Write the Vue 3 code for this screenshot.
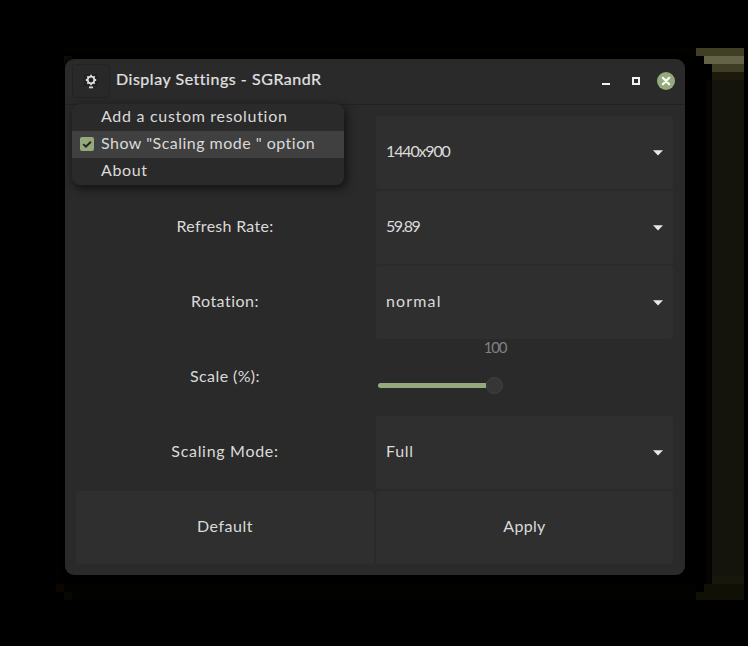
<script setup>
import { ref } from 'vue'

const menu = ref([
  { label: 'Add a custom resolution', fit: 'm-add' },
  { label: 'Show "Scaling mode " option', checked: true, fit: 'm-show' },
  { label: 'About', fit: 'm-about' },
])
const rows = [
  { label: '', value: '1440x900', type: 'combo', fit: '', vfit: 'v-res' },
  { label: 'Refresh Rate:', value: '59.89', type: 'combo', fit: 'l-refresh', vfit: 'v-rate' },
  { label: 'Rotation:', value: 'normal', type: 'combo', fit: 'l-rot', vfit: 'v-rot' },
  { label: 'Scale (%):', value: '100', type: 'scale', fit: 'l-scale', vfit: '' },
  { label: 'Scaling Mode:', value: 'Full', type: 'combo', fit: 'l-mode', vfit: 'v-full' },
]
</script>

<template>
  <div class="desktop">
    <svg class="backdrop" width="748" height="646" viewBox="0 0 748 646" shape-rendering="crispEdges" aria-hidden="true">
      <path fill="#020201" d="M64 48h632v8H64zM56 584h640v16H64v-8h-8z" />
      <path fill="#403f25" d="M696 48h48v8h-48z" />
      <path fill="#646247" d="M704 56h40v8h-40z" />
      <path fill="#403d25" d="M712 64h32v8h-32z" />
      <path fill="#1b1a0c" d="M712 72h32v8h-32z" />
      <path fill="#14140c" d="M712 80h32v496h-32z" />
      <path fill="#040402" d="M706 80h6v504h-6z" />
      <path fill="#17170c" d="M712 576h32v8h-32z" />
      <path fill="#101007" d="M704 584h40v8h-40zM696 592h48v8h-48z" />
      <path fill="#030301" d="M57 80h2v500h-2z" />
      <path fill="#0b0602" d="M56 584h8v8h-8z" />
      <path fill="#080802" d="M64 592h8v8h-8z" />
      <path fill="#10100a" d="M64 56h8v8h-8z" />
    </svg>

    <main class="window">
      <header class="titlebar">
        <button class="menu-button" aria-label="Menu">
          <svg width="16" height="16" viewBox="0 0 16 16">
            <rect x="1" y="1" width="14" height="12" fill="#222" />
            <g stroke="#dcdcdc" fill="none">
              <circle cx="8" cy="7" r="3.3" stroke-width="1.8" />
              <path stroke-width="1.8" d="M8 1.8v2M8 10.2v2M2.8 7h2M11.2 7h2M4.3 3.3l1.4 1.4M10.3 9.3l1.4 1.4M11.7 3.3l-1.4 1.4M5.7 9.3l-1.4 1.4" />
            </g>
            <rect x="6" y="13.5" width="4" height="1.8" fill="#d4d4d4" />
          </svg>
        </button>
        <h1>Display Settings - SGRandR</h1>
        <div class="controls">
          <svg width="8" height="10" viewBox="0 0 8 10"><path fill="#f2f2f2" d="M0 7h8v2H0z" /></svg>
          <svg width="8" height="8" viewBox="0 0 8 8"><path fill="none" stroke="#f2f2f2" stroke-width="2" d="M1 1h6v6H1z" /></svg>
          <svg width="18" height="18" viewBox="0 0 18 18">
            <circle cx="9" cy="9" r="9" fill="#94aa7d" />
            <path d="M5.8 5.8l6.4 6.4M12.2 5.8l-6.4 6.4" stroke="#fff" stroke-width="2.2" stroke-linecap="round" />
          </svg>
        </div>
      </header>

      <ul class="menu">
        <li v-for="item in menu" :key="item.label" :class="{ active: item.checked }">
          <svg v-if="item.checked" class="check" width="14" height="14" viewBox="0 0 14 14">
            <rect width="14" height="14" rx="2" fill="#94aa7d" />
            <path d="M3.2 7.1l2.7 2.6 5-5" fill="none" stroke="#22261f" stroke-width="2" />
          </svg>
          <span :class="item.fit">{{ item.label }}</span>
        </li>
      </ul>

      <section class="grid">
        <template v-for="row in rows" :key="row.value">
          <div class="label"><span :class="row.fit">{{ row.label }}</span></div>
          <div v-if="row.type === 'combo'" class="combo">
            <span :class="row.vfit">{{ row.value }}</span>
            <svg width="10" height="6" viewBox="0 0 10 6"><path d="M0 .3h10L5 5.6z" fill="#e8e8e8" /></svg>
          </div>
          <div v-else class="scale">
            <span class="amount">{{ row.value }}</span>
            <div class="track"><i class="fill"></i><i class="knob"></i></div>
          </div>
        </template>
        <button class="action"><span class="b-default">Default</span></button>
        <button class="action"><span class="b-apply">Apply</span></button>
      </section>
    </main>
  </div>
</template>

<style>
body { margin: 0; background: #000; }
</style>

<style scoped>
* { box-sizing: border-box; }
.desktop {
  position: relative;
  width: 748px;
  height: 646px;
  padding: 59px 0 0 65px;
  overflow: hidden;
  background: #000;
  color: #dadada;
  font: 16px/20px Lato, "Open Sans", sans-serif;
  white-space: pre;
}
.backdrop { position: absolute; left: 0; top: 0; }
svg { display: block; flex: none; }
.window {
  position: relative;
  width: 620px;
  height: 516px;
  border-radius: 9px;
  background: #2a2a2a;
  box-shadow: 0 0 5px 2px #000;
}
.titlebar {
  display: flex;
  align-items: center;
  height: 46px;
  padding: 0 10px 2px 7px;
  border-bottom: 1px solid #222;
}
.menu-button {
  display: grid;
  place-items: center;
  width: 38px;
  height: 34px;
  padding: 0;
  border: 1px solid #232323;
  border-radius: 3px;
  background: #292929;
}
h1 {
  margin: 0 0 3px 6px;
  color: #e2e2e2;
  font-size: 16px;
  line-height: 20px;
  font-weight: 400;
  -webkit-text-stroke: .2px currentColor;
  letter-spacing: .53px;
}
.controls { display: flex; align-items: center; gap: 22px; margin-left: auto; }
.controls svg:last-child { margin-left: -5px; }
.menu {
  position: absolute;
  z-index: 2;
  left: 7px;
  top: 45px;
  width: 272px;
  margin: 0;
  padding: 0;
  list-style: none;
  border-radius: 8px;
  background: #2a2a2a;
  box-shadow: 2px 3px 9px 1px #141414;
}
.menu li { display: flex; align-items: center; height: 27px; padding: 0 0 3px 29px; }
.menu li.active { padding-left: 8px; background: #404040; }
.check { margin: 2px 7px 0 0; }
.grid {
  display: grid;
  grid-template-columns: 298px 297px;
  grid-auto-rows: 73px;
  gap: 2px;
  padding: 11px;
}
.label { display: flex; align-items: center; justify-content: center; padding-bottom: 3px; }
.combo {
  display: flex;
  align-items: center;
  justify-content: space-between;
  padding: 0 10px 3px;
  border-radius: 3px;
  background: #2f2f2f;
}
.combo svg { margin-top: 4px; }
.action {
  padding: 0 0 3px;
  border: 0;
  border-radius: 3px;
  background: #2f2f2f;
  color: inherit;
  font: inherit;
}
.scale { display: flex; flex-direction: column; padding: 0 0 0 2px; }
.amount { width: 24px; margin: -4px 0 19px 105px; text-align: center; color: #808080; font-size: 15px; letter-spacing: -1.2px; }
.track { display: flex; align-items: center; height: 18px; }
.fill { width: 108px; height: 5px; border-radius: 3px 0 0 3px; background: #94aa7d; }
.knob { width: 17px; height: 17px; border: 1px solid #414141; border-radius: 50%; background: #363636; }
.m-add { letter-spacing: .7px; }
.m-show { letter-spacing: .48px; }
.m-about { letter-spacing: .6px; }
.l-refresh { letter-spacing: .28px; }
.l-rot { letter-spacing: .5px; }
.l-scale { letter-spacing: .4px; }
.l-mode { letter-spacing: .7px; }
.v-res { letter-spacing: -1.15px; }
.v-rate { letter-spacing: -1.5px; }
.v-rot { letter-spacing: 1.15px; }
.v-full { letter-spacing: .7px; }
.b-default { letter-spacing: .5px; }
.b-apply { letter-spacing: .3px; }
</style>
